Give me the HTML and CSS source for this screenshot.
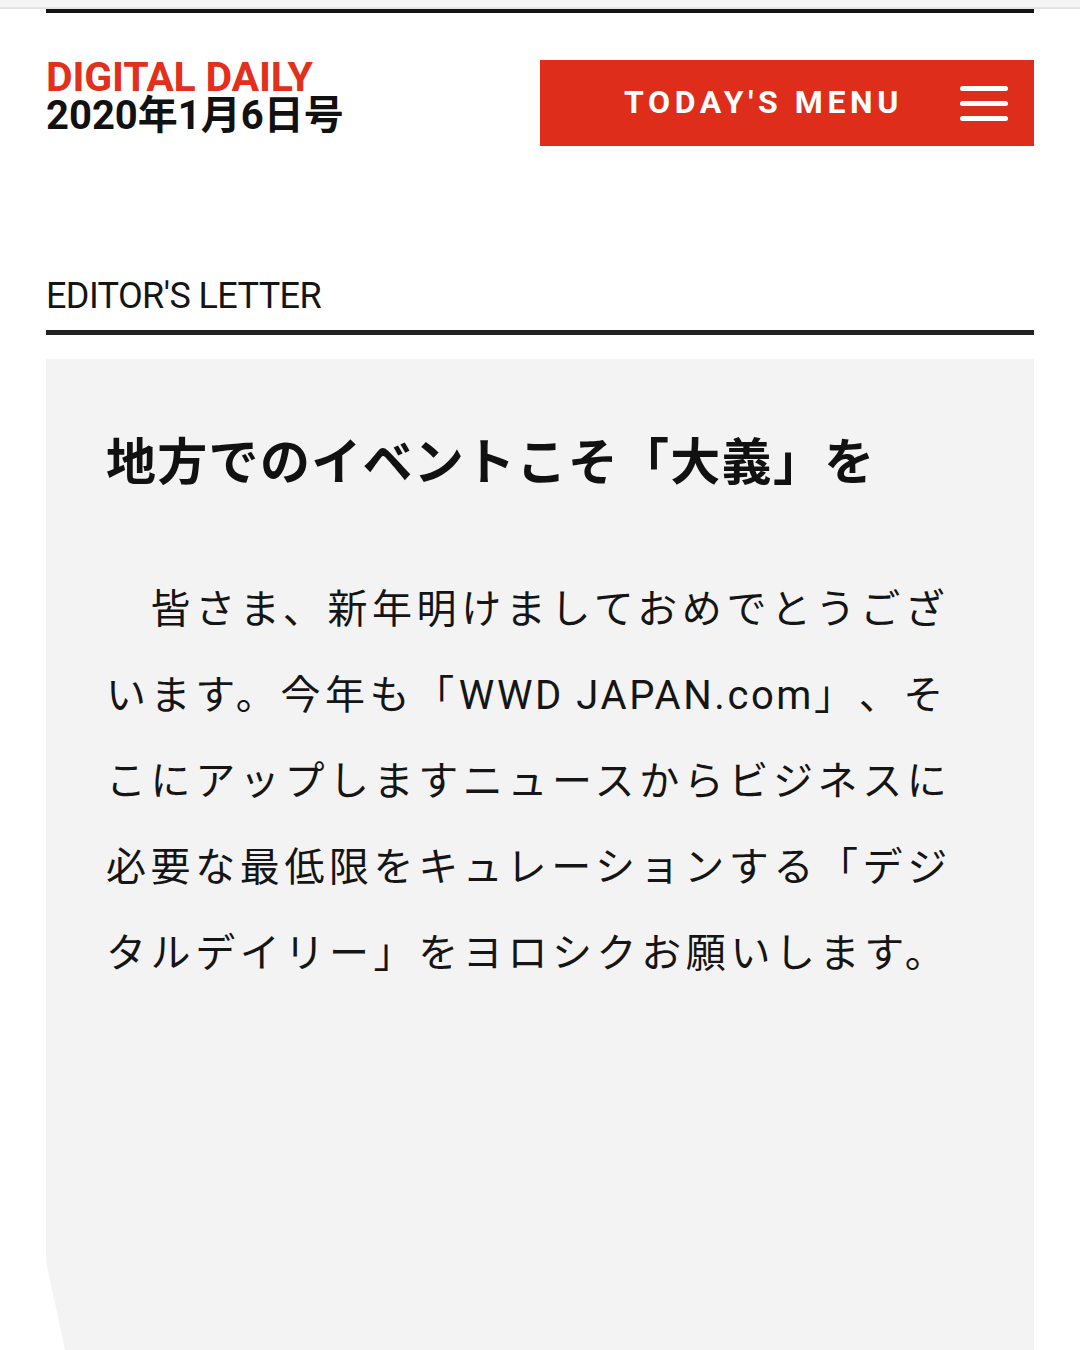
FILE: index.html
```html
<!DOCTYPE html>
<html lang="ja">
<head>
<meta charset="utf-8">
<title>DIGITAL DAILY</title>
<link rel="stylesheet" href="styles.css">
</head>
<body>
<div class="top-strip"></div>
<div class="page">
  <header class="masthead">
    <div class="issue">
      <div class="issue-brand">DIGITAL DAILY</div>
      <div class="issue-date">2020年1月6日号</div>
    </div>
    <button class="menu-btn" type="button">
      <span class="menu-label">TODAY'S MENU</span>
      <span class="burger"><i></i><i></i><i></i></span>
    </button>
  </header>

  <h2 class="section-label">EDITOR'S LETTER</h2>

  <article class="letter">
    <h1 class="letter-title">地方でのイベントこそ「大義」を</h1>
    <p class="letter-body">　皆さま、新年明けましておめでとうございます。今年も「<span class="latin">WWD JAPAN.com</span>」、そこにアップしますニュースからビジネスに必要な最低限をキュレーションする「デジタルデイリー」をヨロシクお願いします。</p>
  </article>
</div>
</body>
</html>
```
FILE: styles.css
```css
html, body {
  margin: 0;
  padding: 0;
  background: #ffffff;
}
body {
  font-family: Roboto, "Noto Sans CJK JP", sans-serif;
  color: #111;
  overflow: hidden;
}
.top-strip {
  height: 9px;
  background: linear-gradient(#f4f4f4 0, #f4f4f4 7px, #d8d8d8 8px, #e8e8e8 9px);
}
.page {
  margin: 0 46px;
  border-top: 4px solid #141414;
}
.masthead {
  display: flex;
  justify-content: space-between;
  align-items: flex-start;
  padding-top: 47px;
}
.issue-brand {
  color: #e2301d;
  font-family: Roboto, sans-serif;
  font-weight: 700;
  font-size: 41px;
  line-height: 34px;
  letter-spacing: -0.2px;
}
.issue-date {
  font-family: Roboto, "Noto Sans CJK JP", sans-serif;
  font-weight: 700;
  font-size: 40px;
  line-height: 44px;
  color: #111;
}
.menu-btn {
  width: 494px;
  height: 86px;
  border: 0;
  background: #df2d1b;
  color: #fff;
  display: flex;
  align-items: center;
  padding: 0 26px 0 84px;
  cursor: pointer;
}
.menu-label {
  font-family: Roboto, sans-serif;
  font-weight: 700;
  font-size: 32px;
  letter-spacing: 4.6px;
  margin-top: -2px;
}
.burger {
  margin-left: auto;
  display: flex;
  flex-direction: column;
  gap: 10px;
  width: 48px;
}
.burger i {
  display: block;
  height: 5px;
  background: #fff;
  border-radius: 3px;
}
.section-label {
  margin: 130px 0 0;
  font-family: Roboto, sans-serif;
  font-weight: 400;
  font-size: 36px;
  line-height: 40px;
  letter-spacing: -0.6px;
  color: #151515;
  padding-bottom: 14px;
  border-bottom: 5px solid #222;
}
.letter {
  margin-top: 24px;
  background: #f3f3f3;
  height: 1000px;
  padding: 69px 0 0 60px;
  box-sizing: border-box;
  clip-path: polygon(0 0, 100% 0, 100% 100%, 21px 100%, 0 903px);
}
.letter-title {
  margin: 0;
  font-family: "Noto Sans CJK JP", sans-serif;
  font-weight: 700;
  font-size: 50px;
  line-height: 60px;
  letter-spacing: 1.3px;
  color: #111;
}
.letter-body {
  margin: 79px 0 0;
  width: 860px;
  font-family: Roboto, "Noto Sans CJK JP", sans-serif;
  font-weight: 400;
  font-size: 40px;
  line-height: 86px;
  letter-spacing: 4.6px;
  text-spacing-trim: space-all;
  color: #151515;
}
.latin {
  letter-spacing: 2.6px;
}
```
